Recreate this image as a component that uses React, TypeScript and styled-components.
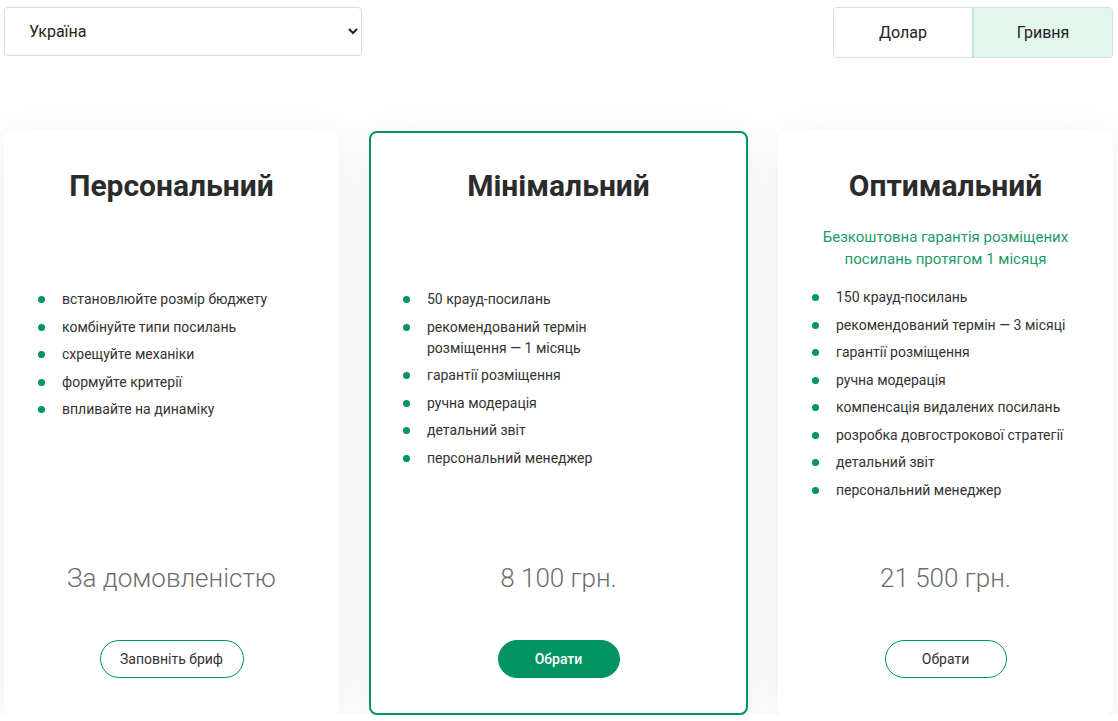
import React from "react";
import styled, { createGlobalStyle } from "styled-components";

const Global = createGlobalStyle`
  html, body { margin: 0; padding: 0; background: #fff; }
  body { font-family: Roboto, "Noto Sans", Arial, sans-serif; color: #333; }
  * { box-sizing: border-box; }
`;

const Page = styled.div`
  padding: 7px 4px 0 4px;
  width: 1118px;
`;

const TopBar = styled.div`
  display: flex;
  justify-content: space-between;
  align-items: flex-start;
`;

const CountrySelect = styled.select`
  width: 358px;
  height: 49px;
  padding: 0 8px 0 20px;
  font-family: Roboto, Arial, sans-serif;
  font-size: 16px;
  color: #222;
  background: #fff;
  border: 1px solid #dcdcdc;
  border-radius: 4px;
  outline: none;
`;

const Toggle = styled.div`
  display: flex;
  width: 280px;
  height: 51px;
  margin-right: 1px;
  border: 1px solid #cfe3da;
  border-radius: 4px;
  overflow: hidden;
`;

const ToggleButton = styled.button<{ $active?: boolean }>`
  flex: 1;
  border: none;
  border-left: ${(p) => (p.$active ? "2px solid #c3e3d5" : "none")};
  background: ${(p) => (p.$active ? "#e2f6ee" : "#fff")};
  font-family: Roboto, Arial, sans-serif;
  font-size: 16px;
  color: #222;
  padding: 0;
  cursor: pointer;
`;

const Cards = styled.div`
  display: flex;
  gap: 30px;
  margin-top: 73px;
  align-items: stretch;
`;

const Card = styled.div<{ $featured?: boolean; $w: number }>`
  width: ${(p) => p.$w}px;
  height: 584px;
  display: flex;
  flex-direction: column;
  align-items: center;
  padding: ${(p) => (p.$featured ? "35px 0 35px" : "37px 0 37px")};
  background: #fff;
  border-radius: 8px;
  border: ${(p) => (p.$featured ? "2px solid #009462" : "none")};
  box-shadow: 0 8px 40px rgba(0, 0, 0, 0.07);
`;

const Title = styled.h2`
  margin: 0;
  font-size: 30px;
  line-height: 36px;
  font-weight: 700;
  color: #2b2b2b;
  text-align: center;
`;

const Subtitle = styled.div`
  margin-top: 22px;
  height: 44px;
  font-size: 15px;
  line-height: 22px;
  color: #1c9a6b;
  text-align: center;
`;

const List = styled.ul<{ $featured?: boolean; $lower?: boolean }>`
  list-style: none;
  margin: ${(p) => (p.$lower ? 19 : 17)}px 0 0 0;
  padding: 0 0 0 ${(p) => (p.$featured ? 33 : 35)}px;
  align-self: stretch;
  flex: 1;
`;

const Item = styled.li`
  display: flex;
  align-items: flex-start;
  gap: 17px;
  max-width: 258px;
  font-size: 14px;
  line-height: 21px;
  color: #333;
  margin-bottom: 6.5px;
`;

const Dot = styled.span`
  flex: none;
  width: 7px;
  height: 7px;
  margin-top: 7px;
  margin-left: -1px;
  border-radius: 50%;
  background: #009462;
`;

const Price = styled.div`
  font-size: 26px;
  line-height: 32px;
  font-weight: 300;
  color: #6e6e6e;
  text-align: center;
`;

const ActionButton = styled.button<{ $filled?: boolean; $w: number }>`
  margin-top: 46px;
  width: ${(p) => p.$w}px;
  height: 38px;
  border-radius: 19px;
  border: 1px solid #009462;
  background: ${(p) => (p.$filled ? "#009462" : "#fff")};
  color: ${(p) => (p.$filled ? "#fff" : "#333")};
  font-family: Roboto, Arial, sans-serif;
  font-size: 14px;
  font-weight: ${(p) => (p.$filled ? 500 : 400)};
  cursor: pointer;
`;

type Plan = {
  title: string;
  subtitle?: boolean;
  items: string[];
  price: string;
  button: string;
  buttonWidth: number;
  featured?: boolean;
  width: number;
};

const plans: Plan[] = [
  {
    title: "Персональний",
    items: [
      "встановлюйте розмір бюджету",
      "комбінуйте типи посилань",
      "схрещуйте механіки",
      "формуйте критерії",
      "впливайте на динаміку",
    ],
    price: "За домовленістю",
    button: "Заповніть бриф",
    buttonWidth: 144,
    width: 335,
  },
  {
    title: "Мінімальний",
    items: [
      "50 крауд-посилань",
      "рекомендований термін розміщення — 1 місяць",
      "гарантії розміщення",
      "ручна модерація",
      "детальний звіт",
      "персональний менеджер",
    ],
    price: "8 100 грн.",
    button: "Обрати",
    buttonWidth: 122,
    featured: true,
    width: 379,
  },
  {
    title: "Оптимальний",
    subtitle: true,
    items: [
      "150 крауд-посилань",
      "рекомендований термін — 3 місяці",
      "гарантії розміщення",
      "ручна модерація",
      "компенсація видалених посилань",
      "розробка довгострокової стратегії",
      "детальний звіт",
      "персональний менеджер",
    ],
    price: "21 500 грн.",
    button: "Обрати",
    buttonWidth: 122,
    width: 335,
  },
];

export default function App() {
  return (
    <Page>
      <Global />
      <TopBar>
        <CountrySelect defaultValue="ua">
          <option value="ua">Україна</option>
        </CountrySelect>
        <Toggle>
          <ToggleButton>Долар</ToggleButton>
          <ToggleButton $active>Гривня</ToggleButton>
        </Toggle>
      </TopBar>
      <Cards>
        {plans.map((p) => (
          <Card key={p.title} $featured={p.featured} $w={p.width}>
            <Title>{p.title}</Title>
            <Subtitle>
              {p.subtitle && (
                <>
                  Безкоштовна гарантія розміщених
                  <br />
                  посилань протягом 1 місяця
                </>
              )}
            </Subtitle>
            <List $featured={p.featured} $lower={!p.subtitle}>
              {p.items.map((it) => (
                <Item key={it}>
                  <Dot />
                  <span>{it}</span>
                </Item>
              ))}
            </List>
            <Price>{p.price}</Price>
            <ActionButton $filled={p.featured} $w={p.buttonWidth}>
              {p.button}
            </ActionButton>
          </Card>
        ))}
      </Cards>
    </Page>
  );
}
